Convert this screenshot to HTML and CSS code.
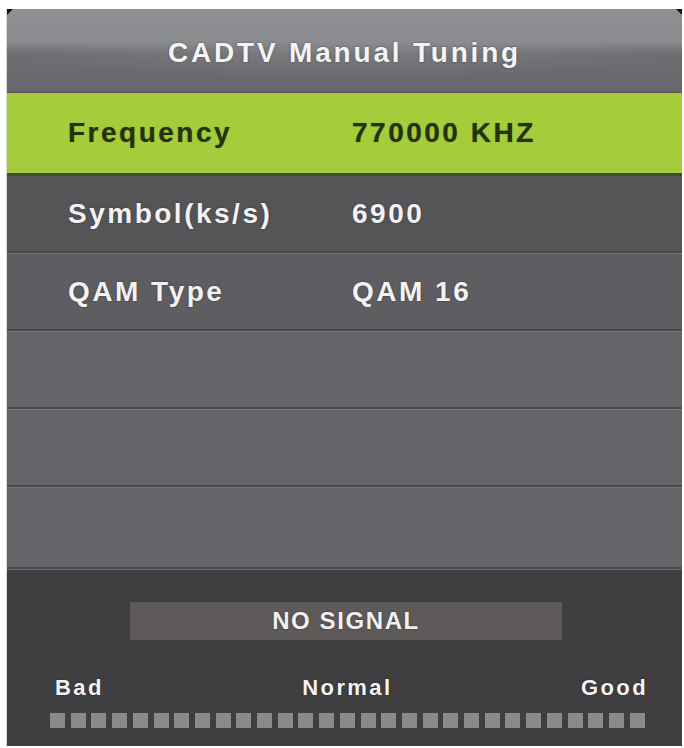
FILE: index.html
```html
<!DOCTYPE html>
<html lang="en">
<head>
<meta charset="utf-8">
<title>CADTV Manual Tuning</title>
<link rel="stylesheet" href="styles.css">
</head>
<body>
<div class="screen">
  <div class="panel">
    <div class="title">CADTV Manual Tuning</div>
    <div class="row active"><span class="label">Frequency</span><span class="value">770000 KHZ</span></div>
    <div class="row dark"><span class="label">Symbol(ks/s)</span><span class="value">6900</span></div>
    <div class="row mid"><span class="label">QAM Type</span><span class="value">QAM 16</span></div>
    <div class="row"></div>
    <div class="row"></div>
    <div class="row last"></div>
    <div class="status">
      <div class="signal-box">NO SIGNAL</div>
      <div class="scale"><span>Bad</span><span>Normal</span><span>Good</span></div>
      <div class="bars">
        <span></span><span></span><span></span><span></span><span></span><span></span><span></span><span></span><span></span><span></span>
        <span></span><span></span><span></span><span></span><span></span><span></span><span></span><span></span><span></span><span></span>
        <span></span><span></span><span></span><span></span><span></span><span></span><span></span><span></span><span></span>
      </div>
    </div>
  </div>
</div>
</body>
</html>
```
FILE: styles.css
```css
html, body {
  margin: 0;
  padding: 0;
  background: #ffffff;
}

body {
  font-family: "Liberation Sans", Arial, sans-serif;
  font-weight: bold;
}

.screen {
  padding: 9px 2px 2px 7px;
}

.panel {
  position: relative;
  height: 737px;
  display: flex;
  flex-direction: column;
  background: #3f3f42;
  box-shadow: -1px 0 0 #d8d8d8;
}

.panel::before,
.panel::after {
  content: "";
  position: absolute;
  top: 0;
  width: 0;
  height: 0;
  border-top: 6px solid #111;
}

.panel::before {
  left: 0;
  border-right: 6px solid transparent;
}

.panel::after {
  right: 0;
  border-left: 6px solid transparent;
}

.title {
  height: 79px;
  padding-top: 4px;
  display: flex;
  align-items: center;
  justify-content: center;
  font-size: 28px;
  letter-spacing: 2.8px;
  color: #f4f4f4;
  text-shadow: 0 0 2px rgba(40, 40, 40, 0.6);
  background:
    radial-gradient(ellipse 55% 35% at 50% 48%, rgba(140, 141, 145, 0.5), rgba(140, 141, 145, 0) 100%),
    linear-gradient(to bottom, #8f9094 0%, #8a8b8f 40%, #7a7a7e 47%, #6d6d71 54%, #68686c 100%);
  border-bottom: 1px solid #56565a;
}

.row {
  height: 75px;
  display: flex;
  align-items: center;
  background: #656569;
  border-top: 1px solid #77777b;
  border-bottom: 2px solid #4a4a4e;
  font-size: 28px;
  letter-spacing: 2.5px;
  color: #f2f2f2;
  text-shadow: 0 0 2px rgba(30, 30, 30, 0.6);
}

.row.active {
  height: 80px;
  border-top: none;
  border-bottom: 3px solid #454c36;
  background: #a4cc3b;
  color: #25310f;
  text-shadow: 0 0 1px rgba(40, 60, 10, 0.5);
}

.row.dark {
  background: #555558;
  border-top: none;
}

.row.mid {
  background: #5e5e62;
}

.row.last {
  height: 79px;
}

.label {
  width: 284px;
  padding-left: 61px;
}

.status {
  flex: 1;
  border-top: 1px solid #6c6c70;
  padding-top: 32px;
}

.signal-box {
  margin-left: 123px;
  width: 432px;
  height: 38px;
  display: flex;
  align-items: center;
  justify-content: center;
  background: #5e5a5a;
  font-size: 24px;
  letter-spacing: 1.6px;
  color: #f0f0f0;
  text-shadow: 0 0 2px rgba(30, 30, 30, 0.6);
}

.scale {
  margin-top: 36px;
  padding: 0 34px 0 48px;
  display: flex;
  justify-content: space-between;
  font-size: 22px;
  line-height: 24px;
  letter-spacing: 2.4px;
  color: #f4f4f4;
  text-shadow: 0 0 2px rgba(20, 20, 20, 0.6);
}

.scale span:nth-child(2) {
  margin-left: 10px;
}

.bars {
  margin-top: 13px;
  padding: 0 37px 0 43px;
  display: flex;
  justify-content: space-between;
}

.bars span {
  width: 15px;
  height: 15px;
  background: #8a8a8d;
}
```
